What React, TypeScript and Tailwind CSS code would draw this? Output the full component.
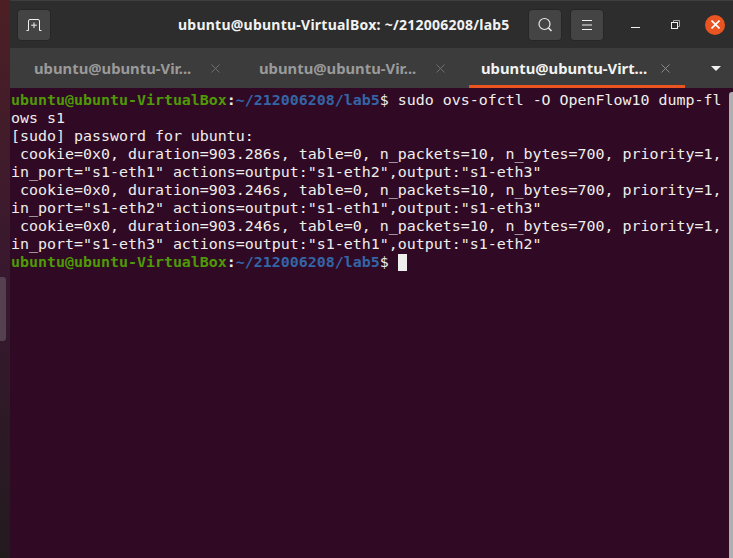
import React from "react";

const lines: string[] = [
  'ows s1',
  '[sudo] password for ubuntu:',
  ' cookie=0x0, duration=903.286s, table=0, n_packets=10, n_bytes=700, priority=1,',
  'in_port="s1-eth1" actions=output:"s1-eth2",output:"s1-eth3"',
  ' cookie=0x0, duration=903.246s, table=0, n_packets=10, n_bytes=700, priority=1,',
  'in_port="s1-eth2" actions=output:"s1-eth1",output:"s1-eth3"',
  ' cookie=0x0, duration=903.246s, table=0, n_packets=10, n_bytes=700, priority=1,',
  'in_port="s1-eth3" actions=output:"s1-eth1",output:"s1-eth2"',
];

function Prompt() {
  return (
    <>
      <span className="font-bold text-[#4e9a06]">ubuntu@ubuntu-VirtualBox</span>
      <span className="font-bold text-[#eeeeec]">:</span>
      <span className="font-bold text-[#3465a4]">~/212006208/lab5</span>
      <span>$ </span>
    </>
  );
}

function CloseX({ color, width = 1 }: { color: string; width?: number }) {
  return (
    <svg width="9" height="9" viewBox="0 0 9 9" fill="none" stroke={color} strokeWidth={width}>
      <path d="M0.5 0.5L8.5 8.5M8.5 0.5L0.5 8.5" />
    </svg>
  );
}

export default function App() {
  return (
    <div className="flex h-[558px] w-[733px] overflow-hidden bg-[#300a24]" style={{ fontFamily: '"Noto Sans", sans-serif' }}>
      <div className="flex w-[10px] shrink-0 flex-col bg-gradient-to-b from-[#4c1f24] via-[#38182f] to-[#231a1e]">
        <div className="mt-[277px] h-[64px] w-[6px] rounded-r-[3px] bg-[#54404f]" />
      </div>
      <div className="flex min-w-0 flex-1 flex-col">
        <div className="flex h-[48px] shrink-0 items-center border-t border-[#3e3e3e] bg-[#2d2d2d] pl-[7px] pr-[8px]">
          <button className="flex h-[32px] w-[34px] items-center justify-center rounded-[4px] border border-[#262626] bg-[#444444]">
            <svg width="16" height="14" viewBox="0 0 16 14" fill="none" stroke="#f0f0f0" strokeWidth="1">
              <path d="M2.5 12.5V3A1.5 1.5 0 0 1 4 1.5H12A1.5 1.5 0 0 1 13.5 3V12.5M8 4.5V10M5.2 7.2H10.8M.5 12.5H2.5M13.5 12.5H15.5" />
            </svg>
          </button>
          <div className="ml-[127px] text-[14px] font-bold tracking-[0.24px] whitespace-nowrap text-[#f2f2f2]">
            ubuntu@ubuntu-VirtualBox: ~/212006208/lab5
          </div>
          <button className="ml-auto flex h-[32px] w-[34px] items-center justify-center rounded-[4px] border border-[#262626] bg-[#444444]">
            <svg width="16" height="16" viewBox="0 0 16 16" fill="none" stroke="#e8e8e8" strokeWidth="1.2">
              <circle cx="7.5" cy="7" r="5.5" />
              <path d="M11.5 11L14.5 14" strokeWidth="1.6" />
            </svg>
          </button>
          <button className="ml-[8px] flex h-[32px] w-[34px] items-center justify-center rounded-[4px] border border-[#262626] bg-[#444444]">
            <svg width="12" height="10" viewBox="0 0 12 10" fill="none" stroke="#f0f0f0" strokeWidth="1">
              <path d="M1 .5H11M1 5H11M1 9.5H11" />
            </svg>
          </button>
          <div className="ml-[16px] flex w-[30px] justify-center">
            <div className="mt-[5px] h-[1px] w-[9px] bg-[#f0f0f0]" />
          </div>
          <div className="ml-[10px] flex w-[30px] justify-center">
            <svg width="9" height="9" viewBox="0 0 9 9" fill="none" stroke="#f0f0f0" strokeWidth="1">
              <path d="M2.5 2V.5H8.5V6.5H6.5" stroke="#a8a8a8" />
              <rect x=".5" y="2.5" width="6" height="6" />
            </svg>
          </div>
          <div className="ml-[15px] flex h-[20px] w-[20px] items-center justify-center rounded-full bg-[#e95420]">
            <CloseX color="#ffffff" width={1.6} />
          </div>
        </div>
        <div className="flex h-[40px] shrink-0 bg-[#3c3c3c]">
          <div className="flex w-[229px] items-center gap-[20px] pl-[24px] text-[#9a9a9a]">
            <span className="text-[14.8px] font-bold whitespace-nowrap">ubuntu@ubuntu-Vir...</span>
            <CloseX color="#6f6f6f" />
          </div>
          <div className="flex w-[230px] items-center gap-[20px] pl-[20px] text-[#9a9a9a]">
            <span className="text-[14.8px] font-bold whitespace-nowrap">ubuntu@ubuntu-Vir...</span>
            <CloseX color="#6f6f6f" />
          </div>
          <div className="flex w-[216px] items-center gap-[14px] border-b-[3px] border-[#e95420] pl-[12px] pt-[3px] text-[#f2f2f2]">
            <span className="text-[14.8px] font-bold whitespace-nowrap">ubuntu@ubuntu-Virt...</span>
            <CloseX color="#8a8a8a" />
          </div>
          <div className="flex flex-1 items-center justify-center pl-[14px]">
            <div className="h-0 w-0 border-x-[5px] border-t-[5px] border-x-transparent border-t-[#f0f0f0]" />
          </div>
        </div>
        <div
          className="relative flex-1 pl-[1px] pt-[3px] text-[14.95px] leading-[18px] whitespace-pre text-[#eeeeec]"
          style={{ fontFamily: '"DejaVu Sans Mono", monospace' }}
        >
          <div>
            <Prompt />
            sudo ovs-ofctl -O OpenFlow10 dump-fl
          </div>
          {lines.map((l, i) => (
            <div key={i}>{l}</div>
          ))}
          <div className="flex items-center">
            <span>
              <Prompt />
            </span>
            <span className="inline-block h-[17px] w-[9px] bg-[#eeeeec]" />
          </div>
          <div className="absolute bottom-0 right-0 top-[4px] w-[4px] rounded-tl-[3px] bg-[#b0b0b0]" />
        </div>
      </div>
    </div>
  );
}
